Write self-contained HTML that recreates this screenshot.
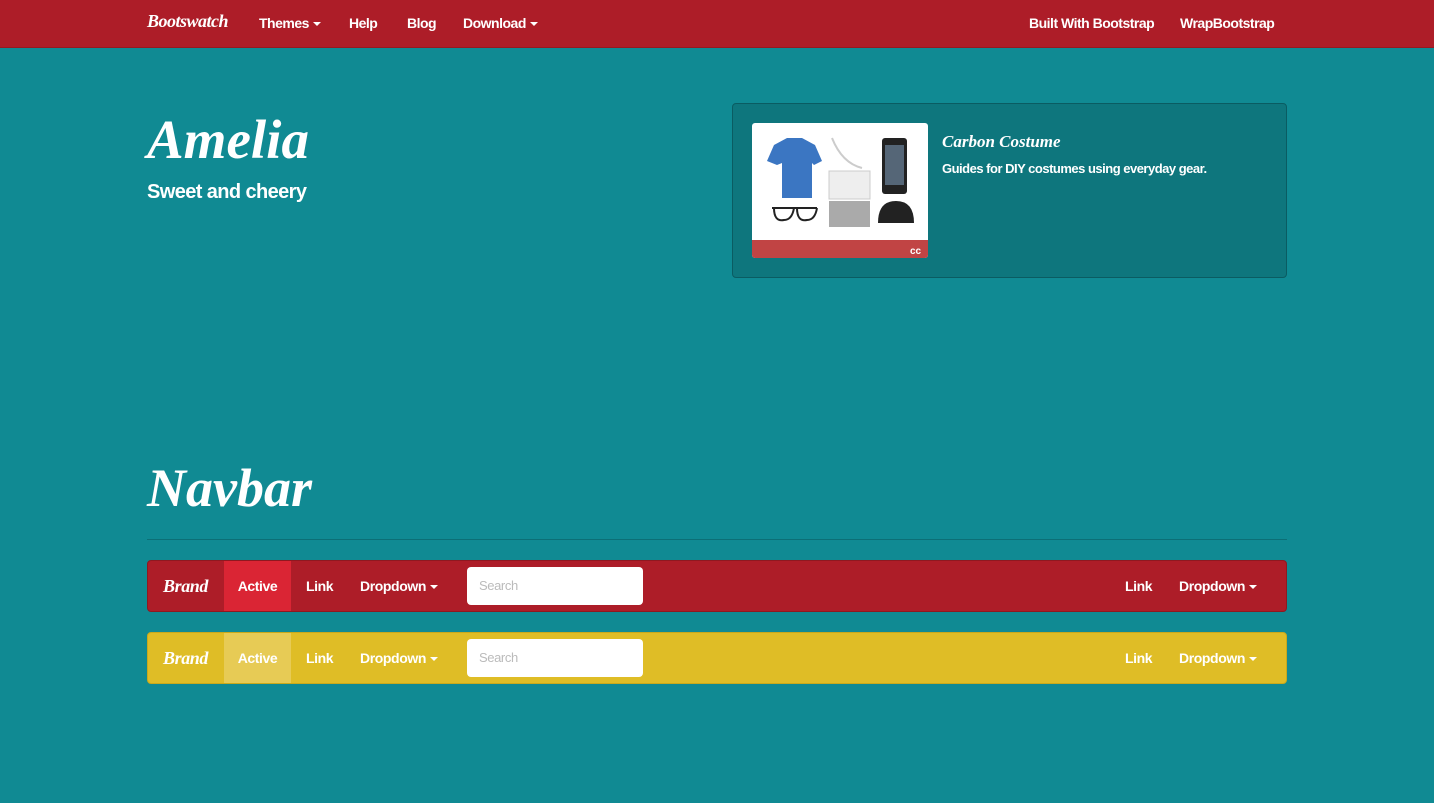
<!DOCTYPE html>
<html><head><meta charset="utf-8"><style>
*{box-sizing:border-box;margin:0;padding:0}
body{width:1434px;height:803px;background:#108a93;font-family:"Liberation Sans",sans-serif;color:#fff;position:relative;overflow:hidden}
.top{position:absolute;left:0;top:0;width:1434px;height:48px;background:#ad1d28;border-bottom:1px solid #961820}
.t{position:absolute;font-size:14px;font-weight:bold;top:15px;letter-spacing:-0.5px}
.lob{font-family:"Liberation Serif",serif;font-style:italic;font-weight:bold}
.car{display:inline-block;width:0;height:0;border-left:4px solid transparent;border-right:4px solid transparent;border-top:4px solid #fff;vertical-align:middle;margin-left:4px}
.card{position:absolute;left:732px;top:103px;width:555px;height:175px;background:#0e767d;border:1px solid #0a5c62;border-radius:4px}
.img{position:absolute;left:19px;top:19px;width:176px;height:135px;background:#fff;border-radius:3px;overflow:hidden}
.nb{position:absolute;left:147px;width:1140px;height:52px;border-radius:4px}
.nb div{position:absolute;top:0;height:50px;line-height:50px;font-size:14px;font-weight:bold;letter-spacing:-0.4px}
.nb div.srch{left:319px;top:6px;width:176px;height:38px;background:#fff;border-radius:4px;color:#bbb;font-weight:normal;line-height:38px;padding-left:12px;font-size:13px}
</style></head><body>
<div class="top">
<div class="t lob" style="left:147px;top:11px;font-size:18px">Bootswatch</div>
<div class="t" style="left:259px">Themes<span class="car"></span></div>
<div class="t" style="left:349px">Help</div>
<div class="t" style="left:407px">Blog</div>
<div class="t" style="left:463px">Download<span class="car"></span></div>
<div class="t" style="left:1029px">Built With Bootstrap</div>
<div class="t" style="left:1180px">WrapBootstrap</div>
</div>
<div class="lob" style="position:absolute;left:147px;top:108px;font-size:55px">Amelia</div>
<div style="position:absolute;left:147px;top:181px;font-size:20px;font-weight:bold;letter-spacing:-0.6px">Sweet and cheery</div>
<div class="card">
<div class="img">
<svg width="176" height="135">
<path d="M22 22 L35 15 L50 15 L63 22 L70 38 L62 42 L60 40 L60 75 L30 75 L30 40 L25 42 L15 38Z" fill="#3b76c2"/>
<rect x="77" y="48" width="41" height="28" fill="#eee" stroke="#ccc"/>
<path d="M80 15 Q90 40 110 45" stroke="#ccc" fill="none" stroke-width="2"/>
<rect x="130" y="15" width="25" height="56" rx="3" fill="#222"/>
<rect x="133" y="22" width="19" height="40" fill="#567"/>
<path d="M20 85 h45 M22 85 q0 14 10 12 q8 0 10-12 M45 85 q0 14 10 12 q8 0 10-12" stroke="#222" fill="none" stroke-width="2"/>
<rect x="77" y="78" width="41" height="26" fill="#aaa"/>
<path d="M126 100 q0-22 18-22 q18 0 18 22z" fill="#222"/>
<rect x="0" y="117" width="176" height="18" fill="#c14444"/>
<text x="158" y="131" font-size="10" font-weight="bold" fill="#fff" font-family="Liberation Sans">cc</text>
</svg></div>
<div class="lob" style="position:absolute;left:209px;top:28px;font-size:17px">Carbon Costume</div>
<div style="position:absolute;left:209px;top:57px;font-size:13px;font-weight:bold;letter-spacing:-0.5px">Guides for DIY costumes using everyday gear.</div>
</div>
<div class="lob" style="position:absolute;left:147px;top:457px;font-size:54px">Navbar</div>
<div style="position:absolute;left:147px;top:539px;width:1140px;height:1px;background:#0c6f76"></div>
<div class="nb" style="top:560px;background:#ad1d28;border:1px solid #8f1820">
<div class="lob" style="left:15px;font-size:18px">Brand</div>
<div style="left:76px;width:67px;background:#da2534;text-align:center">Active</div>
<div style="left:158px">Link</div>
<div style="left:212px">Dropdown<span class="car"></span></div>
<div class="srch">Search</div>
<div style="left:977px">Link</div>
<div style="left:1031px">Dropdown<span class="car"></span></div>
</div>
<div class="nb" style="top:632px;background:#dfbd26;border:1px solid #c9a91c">
<div class="lob" style="left:15px;font-size:18px">Brand</div>
<div style="left:76px;width:67px;background:#e7cb55;text-align:center">Active</div>
<div style="left:158px">Link</div>
<div style="left:212px">Dropdown<span class="car"></span></div>
<div class="srch">Search</div>
<div style="left:977px">Link</div>
<div style="left:1031px">Dropdown<span class="car"></span></div>
</div>
</body></html>
